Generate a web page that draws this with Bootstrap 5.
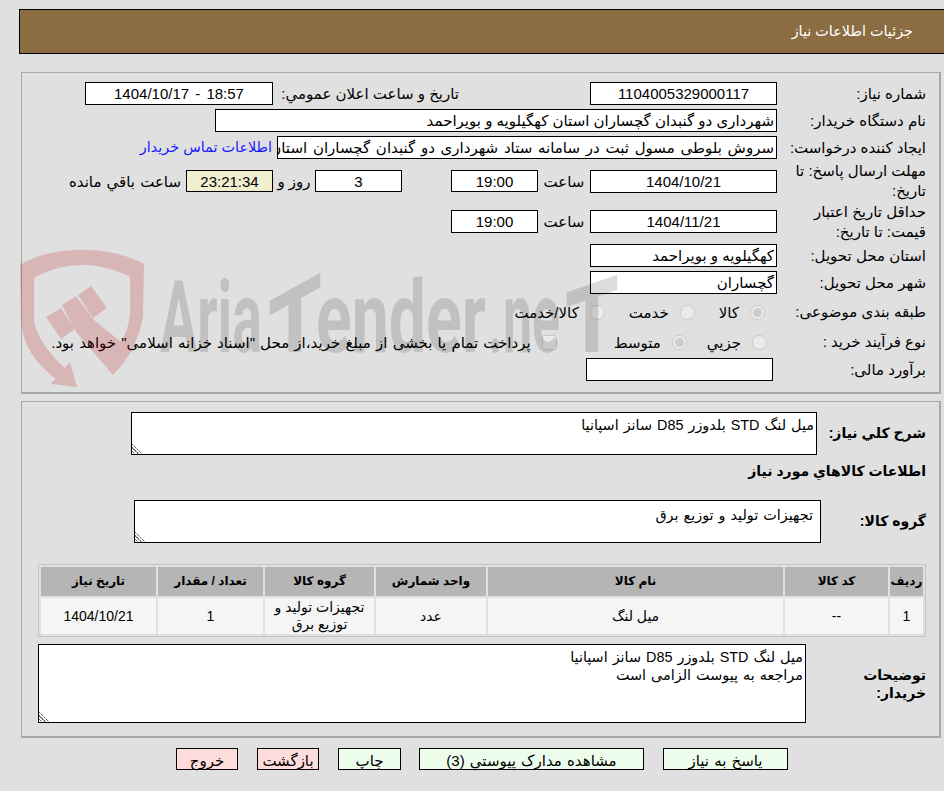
<!DOCTYPE html>
<html lang="fa" dir="rtl">
<head>
<meta charset="utf-8">
<title>جزئیات اطلاعات نیاز</title>
<link href="https://cdn.jsdelivr.net/npm/bootstrap@5.3.0/dist/css/bootstrap.min.css" rel="stylesheet">
<style>
html,body{background:#e0e0e0;}
body{font-family:"Liberation Sans","DejaVu Sans",sans-serif;font-size:15px;color:#000;line-height:19px;padding:9px 0 0;width:944px;height:791px;overflow:hidden;}
.hdr{margin:0 0 0 19px;height:45px;background:#8c6d42;border:1px solid #000;border-right:0;color:#fff;padding:0 31px 0 0;display:flex;align-items:center;font-size:14.4px;}
.pane{position:relative;margin:18px 3px 0 0;margin-left:21px;border:1px solid #a8a8a8;border-width:1px 2px 2px 1px;}
.p1{height:322px;padding:9px 13px 0 0;}
.p2{height:337px;margin-top:7px;padding:10px 13px 0 0;}
.wmark{position:absolute;left:-3px;top:171px;width:640px;height:150px;pointer-events:none;direction:ltr;overflow:visible;z-index:2;}
.frow{display:flex;align-items:center;}
.h23{height:23px;margin-bottom:4px;}
.lab{width:149px;flex:none;padding-left:10px;line-height:20px;}
.box{height:23px;background:#fff;border:1px solid #000;display:flex;align-items:center;padding:0 2px;white-space:nowrap;overflow:hidden;flex:none;}
.ctr{justify-content:center;}
.w187{width:187px;}
.w88{width:87px;height:22px;}
.w562{width:562px;}
.w500{width:500px;word-spacing:1.6px;}
.ltr{direction:ltr;}
.rem{background:#f0f0d0;}
.blue{color:#1a1aff;text-decoration:none;margin-right:5px;font-size:14.4px;}
.h32{height:32px;}
.t4{margin-top:6px;margin-bottom:8px;}
.t5{height:33px;margin-bottom:6px;}
.t5 .w88{height:23px;}
.h24{height:24px;margin-bottom:6px;}
.h24b{height:24px;margin-bottom:4px;}
.t8{margin-top:6px;}
.sa{width:52px;padding:0 5px;text-align:center;flex:none;white-space:nowrap;}
.sx{width:131px;flex:none;}
.ag{width:181px;margin-left:5px;flex:none;white-space:nowrap;}
.w188{width:188px;height:23px;word-spacing:2px;}
.sg{width:49px;flex:none;}
.rz{width:42px;flex:none;text-align:center;white-space:nowrap;}
.re{margin-right:5px;white-space:nowrap;}
input.rad{width:15px;height:15px;margin:0;flex:none;opacity:.85;}
.tx{margin-right:11px;white-space:nowrap;}
.wide{word-spacing:1px;}
input.sp24{margin-right:24px;}
input.sp20{margin-right:20px;}
input.sp57{margin-right:57px;}
.nw{white-space:nowrap;}
input.rad1{margin-right:12px;}
input.rad2{margin-right:10px;}
.lab4{margin-left:4px;}
.bold{font-weight:700;font-size:14px;}
.ta{display:block;background:#fff;border:1px solid #000;border-radius:0;resize:both;margin:0;font:14.4px/18px "Liberation Sans","DejaVu Sans",sans-serif;color:#000;overflow:hidden;outline:0;flex:none;word-spacing:1px;}
.ta::-webkit-resizer{background:repeating-linear-gradient(135deg,rgba(255,255,255,.55) 0 1px,transparent 1px 2.4px),linear-gradient(45deg,#fff 0 1.5px,#666 1.5px 2.5px,#fff 2.5px 4px,#666 4px 5px,#fff 5px 6.5px,#666 6.5px 7.5px,transparent 7.5px);}
.ta1{width:686px;height:43px;margin-right:6px;padding:3px 2px;}
.ta2{width:687px;height:43px;margin-right:39px;padding:5px 7px;}
.ta3{width:768px;height:79px;padding:3px 2px;}
.lab1{width:103px;flex:none;white-space:nowrap;}
.lab2{width:66px;flex:none;white-space:nowrap;}
.lab3{width:120px;flex:none;line-height:18px;padding-left:40px;}
.head2{height:22px;margin-top:5px;margin-bottom:18px;}
.rtop{height:43px;}
.rbot{height:79px;}
.gridt{border:1px solid #c4c4c4;border-collapse:separate;border-spacing:2px;margin:21px 0 7px;width:888px;table-layout:fixed;}
.gridt th{background:#b5b5b5;height:29px;text-align:center;font-size:12px;padding:0;font-weight:700;vertical-align:middle;}
.gridt td{background:#f5f5f5;height:36px;text-align:center;padding:0;font-size:14px;line-height:17px;vertical-align:middle;}
.c1{width:33px}.c2{width:103px}.c3{width:295px}.c4{width:110px}.c5{width:109px}.c6{width:105px}
.bar{display:flex;gap:19px;margin-top:10px;padding-right:156px;}
.act{height:22px;border:1px solid #000;border-radius:0;padding:3px 0 0;font:15px/18px "Liberation Sans","DejaVu Sans",sans-serif;color:#000;flex:none;word-spacing:1px;}
.go{background:#edfdec;}
.no{background:#fedcdc;}
.a1{width:125px}.a2{width:225px}.a3{width:63px;margin-right:-1px}.a4{width:62px}
.wmt{font-family:"Roboto","DejaVu Sans",sans-serif;font-weight:700;font-size:100px;direction:ltr;}
.wmt2{font-size:130px;}
</style>
</head>
<body>
<div class="hdr">جزئیات اطلاعات نیاز</div>

<div class="pane p1">
  <svg class="wmark" viewBox="0 0 640 150" aria-hidden="true">
    <defs><clipPath id="wc"><rect x="0" y="0" width="640" height="108"/></clipPath></defs>
    <g fill="#be0000" opacity=".18">
      <path d="M1 21 C30 2 90 0 125 20 L124 73 C120 95 110 115 94 131 L84 119 C100 105 109 90 111 70 L111 33 C80 17 45 17 15 34 L15 75 C17 92 30 110 46 124 L37 135 C15 118 3 100 2 75 Z"/>
      <path d="M51 118 L58 143 L32 140 Z"/>
      <path d="M27 73 L42 64 L56 85 L42 95 Z"/>
      <path d="M43 61 L57 52 L75 76 L108 103 L94 131 L57 88 Z"/>
      <path d="M59 51 L72 42 L88 64 L74 74 Z"/>
    </g>
    <g fill="#000" opacity=".134">
      <text class="wmt" x="141" y="108" textLength="102" lengthAdjust="spacingAndGlyphs">Aria</text>
      <text class="wmt" x="297" y="108" textLength="170" lengthAdjust="spacingAndGlyphs">ender</text>
      <text class="wmt" x="469" y="108" textLength="72" lengthAdjust="spacingAndGlyphs">.ne</text>
      <g clip-path="url(#wc)">
        <text class="wmt wmt2" x="249" y="135" textLength="54" lengthAdjust="spacingAndGlyphs" transform="translate(276 108) skewY(-29) translate(-276 -108)">T</text>
        <text class="wmt wmt2" x="546" y="132" textLength="54" lengthAdjust="spacingAndGlyphs" transform="translate(573 108) skewY(-19) translate(-573 -108)">T</text>
      </g>
    </g>
  </svg>

  <div class="frow h23">
    <div class="lab">شماره نیاز:</div>
    <div class="box w187 ctr ltr">1104005329000117</div>
    <div class="sx"></div>
    <div class="ag">تاریخ و ساعت اعلان عمومي:</div>
    <div class="box w188 ctr ltr">1404/10/17 - 18:57</div>
  </div>
  <div class="frow h23">
    <div class="lab">نام دستگاه خریدار:</div>
    <div class="box w562">شهرداری دو گنبدان گچساران استان کهگیلویه و بویراحمد</div>
  </div>
  <div class="frow h23">
    <div class="lab nw">ایجاد کننده درخواست:</div>
    <div class="box w500">سروش بلوطی مسول ثبت در سامانه ستاد شهرداری دو گنبدان گچساران استان</div>
    <a class="blue nw" href="#">اطلاعات تماس خریدار</a>
  </div>
  <div class="frow h32 t4">
    <div class="lab">مهلت ارسال پاسخ: تا تاریخ:</div>
    <div class="box w187 ctr ltr">1404/10/21</div>
    <div class="sa">ساعت</div>
    <div class="box w88 ctr ltr">19:00</div>
    <div class="sg"></div>
    <div class="box w88 ctr ltr">3</div>
    <div class="rz">روز و</div>
    <div class="box w88 ctr ltr rem">23:21:34</div>
    <div class="re wide">ساعت باقي مانده</div>
  </div>
  <div class="frow t5">
    <div class="lab">حداقل تاریخ اعتبار قیمت: تا تاریخ:</div>
    <div class="box w187 ctr ltr">1404/11/21</div>
    <div class="sa">ساعت</div>
    <div class="box w88 ctr ltr">19:00</div>
  </div>
  <div class="frow h23">
    <div class="lab">استان محل تحویل:</div>
    <div class="box w187">کهگیلویه و بویراحمد</div>
  </div>
  <div class="frow h23">
    <div class="lab">شهر محل تحویل:</div>
    <div class="box w187">گچساران</div>
  </div>
  <div class="frow h24 t8">
    <div class="lab nw">طبقه بندی موضوعی:</div>
    <input class="rad rad1" type="radio" name="a" checked disabled>
    <span class="tx">کالا</span>
    <input class="rad sp24" type="radio" name="a" disabled>
    <span class="tx">خدمت</span>
    <input class="rad sp24" type="radio" name="a" disabled>
    <span class="tx">کالا/خدمت</span>
  </div>
  <div class="frow h24b">
    <div class="lab nw">نوع فرآیند خرید :</div>
    <input class="rad rad2" type="radio" name="b" disabled>
    <span class="tx">جزيي</span>
    <input class="rad sp20" type="radio" name="b" checked disabled>
    <span class="tx">متوسط</span>
    <input class="rad sp57" type="checkbox" disabled>
    <span class="tx wide">پرداخت تمام یا بخشی از مبلغ خرید،از محل "اسناد خزانه اسلامی" خواهد بود.</span>
  </div>
  <div class="frow h23">
    <div class="lab lab4">برآورد مالی:</div>
    <div class="box w187"></div>
  </div>
</div>

<div class="pane p2">
  <div class="frow rtop">
    <div class="lab1 bold">شرح كلي نياز:</div>
    <textarea class="ta ta1" readonly>میل لنگ STD بلدوزر D85 سانز اسپانیا</textarea>
  </div>
  <div class="frow head2 bold">اطلاعات كالاهاي مورد نياز</div>
  <div class="frow rtop">
    <div class="lab2 bold">گروه کالا:</div>
    <textarea class="ta ta2" readonly>تجهیزات تولید و توزیع برق</textarea>
  </div>
  <table class="gridt">
    <colgroup><col class="c1"><col class="c2"><col class="c3"><col class="c4"><col class="c5"><col class="c6"><col></colgroup>
    <thead><tr><th>ردیف</th><th>کد کالا</th><th>نام کالا</th><th>واحد شمارش</th><th>گروه کالا</th><th>تعداد / مقدار</th><th>تاریخ نیاز</th></tr></thead>
    <tbody><tr><td>1</td><td>--</td><td>میل لنگ</td><td>عدد</td><td>تجهیزات تولید و توزیع برق</td><td>1</td><td>1404/10/21</td></tr></tbody>
  </table>
  <div class="frow rbot">
    <div class="lab3 bold">توضیحات خریدار:</div>
    <textarea class="ta ta3" readonly>میل لنگ STD بلدوزر D85 سانز اسپانیا
مراجعه به پیوست الزامی است</textarea>
  </div>
</div>

<div class="bar">
  <button type="button" class="btn act go a1">پاسخ به نیاز</button>
  <button type="button" class="btn act go a2">مشاهده مدارک پیوستي (3)</button>
  <button type="button" class="btn act go a3">چاپ</button>
  <button type="button" class="btn act no a4">بازگشت</button>
  <button type="button" class="btn act no a4">خروج</button>
</div>
<script src="https://cdn.jsdelivr.net/npm/bootstrap@5.3.0/dist/js/bootstrap.bundle.min.js"></script>
</body>
</html>
